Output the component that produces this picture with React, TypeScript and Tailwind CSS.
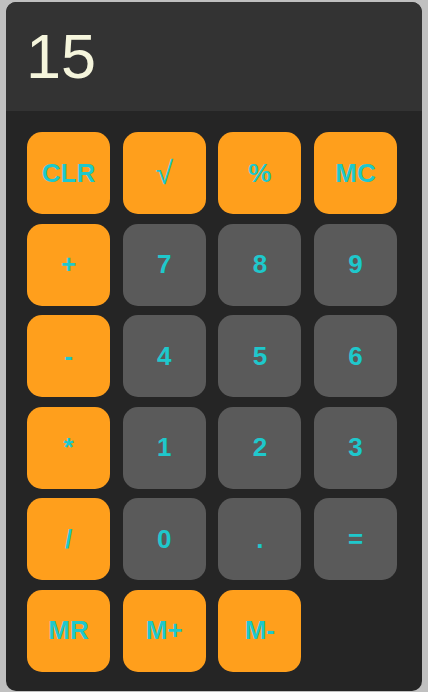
import React from 'react';

type Key = { label: string; kind: 'op' | 'num' };

const keys: Key[] = [
    { label: 'CLR', kind: 'op' },
    { label: '√', kind: 'op' },
    { label: '%', kind: 'op' },
    { label: 'MC', kind: 'op' },
    { label: '+', kind: 'op' },
    { label: '7', kind: 'num' },
    { label: '8', kind: 'num' },
    { label: '9', kind: 'num' },
    { label: '-', kind: 'op' },
    { label: '4', kind: 'num' },
    { label: '5', kind: 'num' },
    { label: '6', kind: 'num' },
    { label: '*', kind: 'op' },
    { label: '1', kind: 'num' },
    { label: '2', kind: 'num' },
    { label: '3', kind: 'num' },
    { label: '/', kind: 'op' },
    { label: '0', kind: 'num' },
    { label: '.', kind: 'num' },
    { label: '=', kind: 'num' },
    { label: 'MR', kind: 'op' },
    { label: 'M+', kind: 'op' },
    { label: 'M-', kind: 'op' },
];

export default function App() {
    return (
        <div className="min-h-screen bg-[#c0c0c0] px-[6px] pt-[2px] font-['Liberation_Sans',Arial,sans-serif]">
            <div className="h-[689px] w-[416px] overflow-hidden rounded-[10px] bg-[#252525]">
                <div className="flex h-[109px] items-center bg-[#333333] pl-[20px]">
                    <span className="text-[63px] leading-none text-[#f5f5dc]">15</span>
                </div>
                <div className="grid grid-cols-[repeat(4,83px)] gap-x-[12.7px] gap-y-[9.6px] pl-[21px] pt-[21px]">
                    {keys.map((k) => (
                        <button
                            key={k.label}
                            className={
                                (k.kind === 'op' ? 'bg-[#ff9f1c] ' : 'bg-[#5a5a5a] ') +
                                (k.label === '√' ? 'font-normal text-[32px] ' : 'font-bold text-[26px] ') +
                                'flex h-[82px] items-center justify-center rounded-[15px] text-[#1ec8cc]'
                            }
                        >
                            {k.label}
                        </button>
                    ))}
                </div>
            </div>
        </div>
    );
}
